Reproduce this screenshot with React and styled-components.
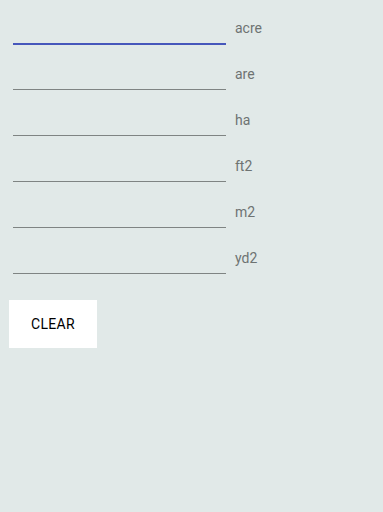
import styled, { createGlobalStyle } from 'styled-components';

const GlobalStyle = createGlobalStyle`
  html, body {
    margin: 0;
    padding: 0;
    background: #e1e9e8;
    font-family: Roboto, 'Liberation Sans', sans-serif;
  }
`;

const Page = styled.div`
  min-height: 512px;
  background: #e1e9e8;
`;

const Form = styled.form`
  display: flex;
  flex-direction: column;
`;

const Row = styled.div`
  display: flex;
  align-items: flex-start;
  height: 46px;
  padding-left: 13px;
  gap: 9px;
`;

const Field = styled.input`
  box-sizing: border-box;
  width: 213px;
  height: ${(p) => (p.$focused ? '45px' : '44px')};
  margin: 0;
  padding: 0 0 6px;
  border: none;
  border-bottom: ${(p) =>
    p.$focused ? '2px solid #4657bb' : '1px solid #7f8483'};
  background: transparent;
  font-family: inherit;
  font-size: 16px;
  color: #212121;
  outline: none;
`;

const Unit = styled.span`
  margin-top: 18px;
  font-size: 14px;
  line-height: 20px;
  color: #6e7372;
`;

const ClearButton = styled.button`
  align-self: flex-start;
  margin: 24px 0 0 9px;
  width: 88px;
  height: 48px;
  border: none;
  border-radius: 0;
  background: #ffffff;
  font-family: inherit;
  font-size: 14px;
  font-weight: 400;
  letter-spacing: 0.3px;
  color: #000;
  text-transform: uppercase;
  cursor: pointer;
`;

const units = ['acre', 'are', 'ha', 'ft2', 'm2', 'yd2'];

const App = () => {
  return (
    <Page>
      <GlobalStyle />
      <Form onSubmit={(e) => e.preventDefault()}>
        {units.map((unit, index) => (
          <Row key={unit}>
            <Field type='text' name={unit} $focused={index === 0} />
            <Unit>{unit}</Unit>
          </Row>
        ))}
        <ClearButton type='button'>Clear</ClearButton>
      </Form>
    </Page>
  );
};

export default App;
